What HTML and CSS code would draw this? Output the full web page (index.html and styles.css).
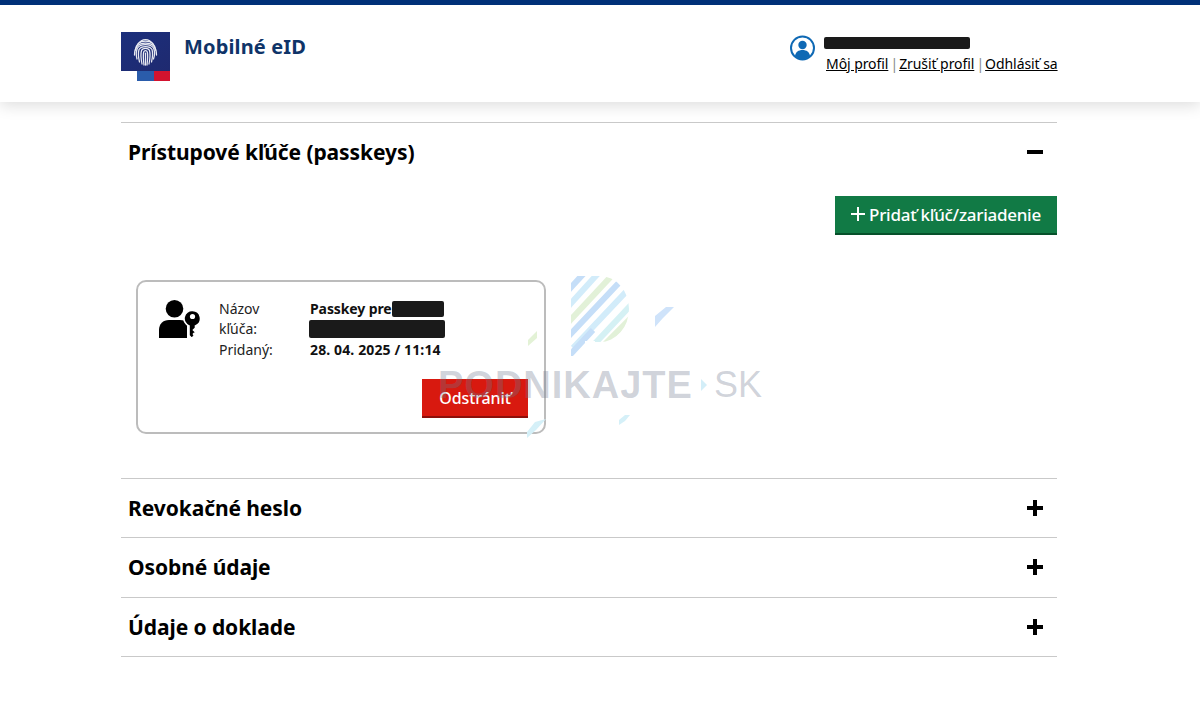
FILE: index.html
```html
<!DOCTYPE html>
<html lang="sk">
<head>
<meta charset="utf-8">
<title>Mobilné eID</title>
<link rel="stylesheet" href="styles.css">
</head>
<body>
<header class="site-header">
  <div class="wrap header-inner">
    <div class="brand">
      <svg class="logo" width="49" height="49" viewBox="0 0 49 49" aria-hidden="true">
        <defs>
          <linearGradient id="lg" x1="0" y1="0" x2="1" y2="1">
            <stop offset="0" stop-color="#1b2f7c"/>
            <stop offset="1" stop-color="#1f2a70"/>
          </linearGradient>
        </defs>
        <rect x="16" y="39" width="17" height="10" fill="#2a5cab"/>
        <rect x="33" y="39" width="16" height="10" fill="#d3132f"/>
        <rect width="49" height="39" fill="url(#lg)"/>
        <g fill="none" stroke="#e9ebf2" stroke-width="1.250" stroke-linecap="round">
          <path d="M17 12c2-3 4.500-4.500 7.500-4.500S30 9 32 12"/>
          <path d="M14.500 18c.5-6 4.500-9 10-9s9.500 3 10 9"/>
          <path d="M13.500 23c0-8 4-12 11-12s11 4 11 12"/>
          <path d="M16 27c-1-4-1-8 .5-11 1.500-2.500 4.500-3.500 8-3.500s6.500 1 8 3.500c1.500 3 1 8 0 11"/>
          <path d="M18.500 30c-1-4-1.500-9-.5-12.500 1-2 3.500-3 6.500-3s5.500 1 6.500 3c1 3.500 .5 8.500-.5 12.500"/>
          <path d="M21 32c-.8-4-1.500-10-.5-13.500.5-1.500 2-2.200 4-2.200s3.500.7 4 2.200c1 3.500.3 9.500-.5 13.500"/>
          <path d="M23 33c-.5-4-1-10-.3-13 .3-1 1-1.500 1.800-1.500s1.500.5 1.800 1.500c.7 3 .2 9-.3 13"/>
          <path d="M24.500 33V21"/>
        </g>
      </svg>
      <span class="brand-name">Mobilné eID</span>
    </div>
    <div class="account">
      <svg class="avatar" width="25" height="26" viewBox="0 0 25 26" aria-hidden="true">
        <circle cx="12.500" cy="13" r="11.500" fill="#fff" stroke="#0f69b4" stroke-width="2"/>
        <circle cx="12.500" cy="10" r="4.200" fill="#0f69b4"/>
        <path d="M5 21c.5-4 3.500-6 7.500-6s7 2 7.500 6c-2 2-4.700 3.300-7.500 3.300S7 23 5 21z" fill="#0f69b4"/>
      </svg>
      <div class="account-text">
        <span class="redact redact-name"></span>
        <nav class="account-links">
          <a href="#">Môj profil</a><span class="sep"> | </span><a href="#">Zrušiť profil</a><span class="sep"> | </span><a href="#">Odhlásiť sa</a>
        </nav>
      </div>
    </div>
  </div>
</header>

<main class="wrap content">
  <section class="panel panel-open">
    <div class="panel-head">
      <h2>Prístupové kľúče (passkeys)</h2>
      <span class="toggle toggle-minus"></span>
    </div>
    <div class="actions">
      <a class="btn btn-green" href="#"><span class="plus-thin"></span>Pridať kľúč/zariadenie</a>
    </div>
    <div class="key-card">
      <div class="key-top">
        <svg class="key-icon" width="42" height="40" viewBox="0 0 42 40" aria-hidden="true">
          <circle cx="15.500" cy="8.800" r="8.800" fill="#000"/>
          <path d="M0 38v-8c0-6 4-10 10-10h11c3 0 5 .7 7 2.500V38z" fill="#000"/>
          <path d="M33.500 10.500a8 8 0 0 1 3 15.400V28l-2 2 2 2-2 2 .9 1.200-2.400 3.300-3-3V25.900a8 8 0 0 1 3.500-15.400z" fill="#000" stroke="#fff" stroke-width="1.600"/>
          <circle cx="33.500" cy="16.500" r="2.600" fill="#fff"/>
        </svg>
        <dl class="key-data">
          <dt>Názov kľúča:</dt>
          <dd>
            <div class="dd-line">Passkey pre <span class="redact redact-a"></span></div>
            <div class="dd-line"><span class="redact redact-b"></span></div>
          </dd>
          <dt>Pridaný:</dt>
          <dd>28. 04. 2025 / 11:14</dd>
        </dl>
      </div>
      <div class="key-actions">
        <a class="btn btn-red" href="#">Odstrániť</a>
      </div>
    </div>
  </section>

  <section class="panel"><div class="panel-head"><h2>Revokačné heslo</h2><span class="toggle toggle-plus"></span></div></section>
  <section class="panel"><div class="panel-head"><h2>Osobné údaje</h2><span class="toggle toggle-plus"></span></div></section>
  <section class="panel panel-last"><div class="panel-head"><h2>Údaje o doklade</h2><span class="toggle toggle-plus"></span></div></section>
</main>

<div class="watermark" aria-hidden="true">
  <svg class="wm-art" width="240" height="170" viewBox="0 0 240 170">
    <defs>
      <clipPath id="pclip"><path d="M44 2h29a29 33 0 0 1 0 66H68v-1H58v15H44z"/></clipPath>
    </defs>
    <g clip-path="url(#pclip)" stroke-width="6" fill="none">
      <path d="M36 22 60 -4" stroke="#c5def8"/>
      <path d="M36 38 76 -6" stroke="#d2ecfa"/>
      <path d="M36 54 90 -4" stroke="#e2f1d8"/>
      <path d="M38 66 104 -4" stroke="#c5def8"/>
      <path d="M46 74 112 4" stroke="#d2ecfa"/>
      <path d="M60 78 118 16" stroke="#d5f1f4"/>
      <path d="M76 72 120 28" stroke="#e2f1d8"/>
      <path d="M40 84 66 56" stroke="#c5def8"/>
    </g>
    <path d="M128 42l11-9h8l-11 11-8 9z" fill="#cfe3fa"/>
    <path d="M1 66l9-9v7l-9 8z" fill="#e3f2d6"/>
    <path d="M0 158l8-10 11-3-10 11-9 8z" fill="#d5f0f8"/>
    <path d="M92 146l6-5h5l-5 6-6 4z" fill="#d5f0f8"/>
  </svg>
  <div class="wm-text">PODNIKAJTE<span class="wm-arrow"></span><span class="wm-sk">SK</span></div>
</div>
</body>
</html>
```
FILE: styles.css
```css
* { box-sizing: border-box; }
html, body { margin: 0; padding: 0; }
body {
  position: relative;
  height: 715px;
  overflow: hidden;
  background: #fff;
  color: #000;
  font-family: "Noto Sans", "Liberation Sans", sans-serif;
}
.wrap { width: 936px; margin-left: 121px; }

.site-header {
  height: 102px;
  border-top: 5px solid #003078;
  background: #fff;
  box-shadow: 0 4px 14px rgba(0, 0, 0, .13);
}
.header-inner {
  display: flex;
  justify-content: space-between;
  align-items: flex-start;
}
.brand { display: flex; align-items: flex-start; padding-top: 27px; }
.logo { display: block; }
.brand-name {
  margin-left: 14px;
  margin-top: 1px;
  font-size: 20px;
  line-height: 28px;
  font-weight: 700;
  letter-spacing: .15px;
  color: #0f3468;
}
.account { display: flex; align-items: flex-start; padding-top: 30px; }
.avatar { display: block; margin-right: 9px; }
.account-text { display: flex; flex-direction: column; width: 233px; }
.redact { display: inline-block; background: #1a1a1a; border-radius: 2px; }
.redact-name { width: 146px; height: 12px; margin-top: 2px; }
.account-links {
  margin: 5px 0 0 2px;
  font-size: 14px;
  line-height: 20px;
  letter-spacing: -.07px;
  white-space: nowrap;
}
.account-links a { color: #000; text-decoration: underline; }
.sep { color: #8a8a8a; letter-spacing: -1.4px; }

.content { padding-top: 20px; }
.panel { border-top: 1px solid #c9c9c9; }
.panel-last { border-bottom: 1px solid #c9c9c9; }
.panel-head {
  display: flex;
  align-items: center;
  justify-content: space-between;
  height: 58.5px;
  padding: 0 14px 0 7px;
}
.panel-head h2 {
  margin: 0;
  font-size: 21px;
  line-height: 28px;
  font-weight: 700;
  letter-spacing: -.08px;
}
.toggle { position: relative; display: block; width: 16px; height: 16px; }
.toggle::before,
.toggle-plus::after {
  content: "";
  position: absolute;
  background: #000;
}
.toggle::before { left: 0; right: 0; top: 6px; height: 4px; }
.toggle-plus::after { top: 0; bottom: 0; left: 6px; width: 4px; }

.actions { display: flex; justify-content: flex-end; margin-top: 14px; }
.btn {
  display: inline-flex;
  align-items: center;
  justify-content: center;
  color: #fff;
  text-decoration: none;
  font-weight: 500;
}
.btn-green {
  width: 222px;
  height: 39px;
  background: #117a45;
  border-bottom: 2px solid #06502a;
  font-size: 17px;
  letter-spacing: -.26px;
}
.plus-thin { position: relative; width: 14px; height: 14px; margin-right: 4px; }
.plus-thin::before, .plus-thin::after { content: ""; position: absolute; background: #fff; }
.plus-thin::before { left: 0; right: 0; top: 6px; height: 2px; }
.plus-thin::after { top: 0; bottom: 0; left: 6px; width: 2px; }

.key-card {
  width: 410px;
  height: 154px;
  margin: 45px 0 44px 15px;
  padding: 18px 16px 0 21px;
  border: 2px solid #bcbcbc;
  border-radius: 10px;
  background: #fff;
}
.key-top { display: flex; align-items: flex-start; }
.key-icon { display: block; flex: none; margin-right: 18px; }
.key-data {
  display: grid;
  grid-template-columns: 91px 135px;
  margin: -1px 0 0;
  font-size: 14px;
  line-height: 20.500px;
  letter-spacing: 0;
}
.key-data dt { width: 60px; color: #222; }
.key-data dd { margin: 0; font-weight: 700; white-space: nowrap; color: #111; letter-spacing: .12px; }
.dd-line { display: flex; align-items: center; height: 20.500px; white-space: pre; letter-spacing: -.1px; }
.redact-a { width: 52px; height: 16px; margin-left: -3px; }
.redact-b { width: 136px; height: 18px; margin-left: -1px; }
.key-actions { display: flex; justify-content: flex-end; margin-top: 19px; }
.btn-red {
  position: relative;
  z-index: 1;
  width: 106px;
  height: 39px;
  background: #d8190f;
  border-bottom: 2px solid #8e0f0a;
  font-size: 16px;
  letter-spacing: -.1px;
}

.watermark {
  position: absolute;
  left: 527px;
  top: 274px;
  width: 240px;
  height: 170px;
  z-index: 2;
  pointer-events: none;
}
.wm-art { position: absolute; left: 0; top: 0; display: block; }
.wm-text {
  position: absolute;
  left: -89px;
  top: 91px;
  display: flex;
  align-items: center;
  height: 40px;
  font-family: "Liberation Sans", sans-serif;
  font-size: 38px;
  font-weight: 700;
  letter-spacing: 1px;
  color: rgba(110, 120, 140, .32);
  white-space: nowrap;
}
.wm-arrow {
  width: 0; height: 0;
  margin: 0 7px 0 8px;
  border-left: 6px solid #d3eef8;
  border-top: 6px solid transparent;
  border-bottom: 6px solid transparent;
}
.wm-sk { font-size: 36px; font-weight: 400; letter-spacing: 0; }
```
